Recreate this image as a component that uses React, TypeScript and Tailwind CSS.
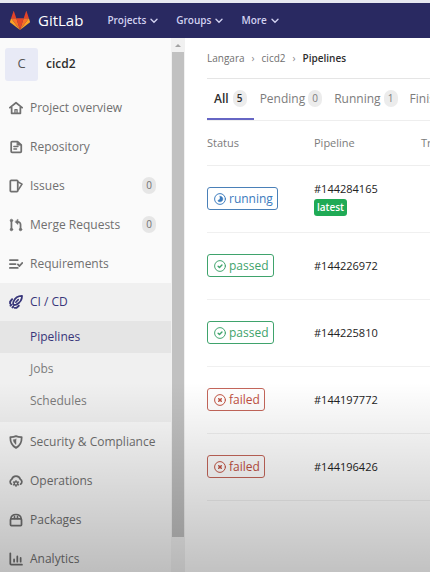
import type { ReactNode } from "react";

function Icon({ children, className = "size-[14px]" }: { children: ReactNode; className?: string }) {
  return (
    <svg
      viewBox="0 0 16 16"
      className={`shrink-0 ${className}`}
      fill="none"
      stroke="currentColor"
      strokeWidth="2"
      strokeLinecap="round"
      strokeLinejoin="round"
      aria-hidden="true"
    >
      {children}
    </svg>
  );
}

const icons = {
  home: (
    <>
      <path d="M1 7.600 8 2l7 5.600M3 7v7h10V7" />
      <path d="M6.800 13.500v-3.700h2.400v3.700" strokeWidth="1.500" />
    </>
  ),
  doc: (
    <>
      <path d="M3.500 1.800h6.300L14 5.600v7.600a1 1 0 0 1-1 1H3.500a1 1 0 0 1-1-1V2.800a1 1 0 0 1 1-1z" />
      <path d="M5.600 7.300h4.600M5.600 10.400h3" strokeWidth="1.700" />
      <path d="M9.300 2.200 13.600 6H9.300z" fill="currentColor" strokeWidth="0.600" />
    </>
  ),
  issues: (
    <>
      <rect x="1.500" y="1.500" width="8.500" height="13" rx="1" />
      <path d="M10.500 3.500 14.900 5.800 10.800 12.200" strokeWidth="1.800" />
    </>
  ),
  merge: (
    <>
      <path d="M2.800 3.500v9.500M13.200 13V7.500a3 3 0 0 0-3-3" />
      <circle cx="2.800" cy="2.800" r="1.500" fill="currentColor" strokeWidth="0.600" />
      <circle cx="2.800" cy="13.200" r="1.500" fill="currentColor" strokeWidth="0.600" />
      <circle cx="13.200" cy="13.200" r="1.500" fill="currentColor" strokeWidth="0.600" />
      <path d="M10.300 1.600v5.800L7 4.500z" fill="currentColor" strokeWidth="0.600" />
    </>
  ),
  requirements: <path d="M1 3.500h9M1 8h6.500M1 12.500h9M10.200 8.500l1.800 1.800L15.200 6.800" />,
  rocket: (
    <>
      <path d="M14.900 1.100C10.500 1 7 3.300 5 7.800l-.4 2.700 1 1 2.700-.5c4.300-2.200 6.600-5.500 6.600-9.900z" strokeWidth="2" />
      <path d="M10.600 5.300 7.800 8.300" strokeWidth="1.800" />
      <path d="M3.600 4.800 1.300 7.600v2.200M11.200 12.300l-2.600 2.400H6.400M2.600 11.300l-.9.900M4.800 13.300l-.9.900" strokeWidth="2.200" />
    </>
  ),
  shield: (
    <>
      <path d="M8 1.300c2 .9 4 1.300 6.500 1.200C14.600 8.500 12.500 12.300 8 14.700 3.500 12.300 1.400 8.500 1.500 2.500 4 2.600 6 2.200 8 1.300z" />
      <path d="M8 4.800v6C6 9.200 5 7.500 4.900 5.300 6 5.300 7 5.200 8 4.800z" fill="currentColor" strokeWidth="0.500" />
    </>
  ),
  cloud: (
    <>
      <path d="M2.800 11.600A3.200 3.200 0 0 1 3.200 6C3.800 3.500 5.700 2.300 8 2.300s4.300 1.200 4.900 3.700a3.200 3.200 0 0 1 .3 5.600" />
      <circle cx="8" cy="10.800" r="2" strokeWidth="1.700" />
      <path d="M8 7.500v.8M8 13.300v.8M5.100 9.200l.7.400M10.200 12l.7.400M5.100 12.400l.7-.4M10.200 9.600l.7-.4" strokeWidth="1.500" />
    </>
  ),
  package: (
    <>
      <rect x="1.700" y="6.600" width="12.600" height="7.800" rx="1" />
      <path d="M2 6.600C2.500 3 4.500 1.700 8 1.700s5.500 1.300 6 4.900M6.300 6.300V4.200M9.700 6.300V4.200" strokeWidth="1.900" />
    </>
  ),
  chart: (
    <>
      <path d="M1.500 1.500v12a1 1 0 0 0 1 1h12.300" />
      <path d="M5.800 8.500V11M9.500 5v6M13.300 6.800V11" />
    </>
  ),
};

function Chevron() {
  return (
    <svg viewBox="0 0 8 6" className="h-[6px] w-[8px]" fill="none" stroke="currentColor" strokeWidth="1.400" strokeLinecap="round" aria-hidden="true">
      <path d="M1 1.200l3 3 3-3" />
    </svg>
  );
}

function Logo() {
  return (
    <svg viewBox="0 0 20 19" className="h-[19px] w-[20px]" aria-hidden="true">
      <path d="M10 19 13.700 7.300H6.300z" fill="#e24329" />
      <path d="M10 19 6.300 7.300H1.100zM10 19l3.700-11.700h5.200z" fill="#fc6d26" />
      <path d="M1.100 7.300 0 10.700c-.1.400 0 .7.300.9L10 19zM18.900 7.300 20 10.700c.1.400 0 .7-.3.900L10 19z" fill="#fca326" />
      <path d="M1.100 7.300h5.200L4 .4c-.1-.4-.5-.4-.6 0zM18.900 7.300h-5.200L16 .4c.1-.4.500-.4.600 0z" fill="#e24329" />
    </svg>
  );
}

function NavItem({ icon, label, count, active }: { icon: ReactNode; label: string; count?: number; active?: boolean }) {
  return (
    <a
      href="#"
      className={`flex items-center gap-[7px] pr-[15px] pl-[9px] text-[12px] whitespace-nowrap ${active ? "h-[38px] font-medium text-[#38367a]" : "h-[39px] text-[#707070]"}`}
    >
      <Icon>{icon}</Icon>
      <span className="flex-1">{label}</span>
      {count !== undefined && (
        <span className="flex h-[17px] w-[14px] items-center justify-center rounded-full bg-[#e6e6e6] text-[10px]">{count}</span>
      )}
    </a>
  );
}

function SubItem({ label, active }: { label: string; active?: boolean }) {
  return (
    <a
      href="#"
      className={`flex h-[32px] items-center pl-[30px] text-[12px] ${active ? "bg-[#e5e5e5] font-medium text-[#38367a]" : "text-[#7c7c7c]"}`}
    >
      {label}
    </a>
  );
}

function Tab({ label, count, active }: { label: string; count?: number; active?: boolean }) {
  return (
    <button
      type="button"
      role="tab"
      aria-selected={!!active}
      className={`flex h-[41px] shrink-0 items-center border-b-2 text-[12px] ${active ? "gap-1 border-[#6666c4] px-[7px] font-semibold text-[#2e2e2e]" : "gap-[3px] border-transparent px-[6px] text-[#7c7c7c]"}`}
    >
      {label}
      {count !== undefined && (
        <span className="flex h-[17px] w-[14px] items-center justify-center rounded-full bg-[#ececec] text-[10px]">{count}</span>
      )}
    </button>
  );
}

type Status = "running" | "passed" | "failed";

const statusColors: Record<Status, string> = {
  running: "border-[#4a80b8] text-[#3a7abd]",
  passed: "border-[#3fa36c] text-[#3fa36c]",
  failed: "border-[#c4665a] text-[#c0503f]",
};

const statusIcons: Record<Status, ReactNode> = {
  running: <path d="M8 4.500v3.500L5 10.200A3.800 3.800 0 1 0 8 4.200z" fill="currentColor" strokeWidth="0.600" />,
  passed: <path d="M5.500 8.200l1.800 1.800 3.300-3.400" strokeWidth="1.900" />,
  failed: <path d="M6.300 6.300l3.400 3.400M9.700 6.300 6.300 9.700" strokeWidth="2" />,
};

function StatusBadge({ status }: { status: Status }) {
  return (
    <a href="#" className={`inline-flex h-[23px] items-center gap-[3px] rounded-[3px] border pr-[4px] pl-[6px] text-[12px] ${statusColors[status]}`}>
      <Icon className="size-[12px]">
        <circle cx="8" cy="8" r="7.200" strokeWidth="1.300" />
        {statusIcons[status]}
      </Icon>
      {status}
    </a>
  );
}

const pipelines: { id: string; status: Status; latest?: boolean }[] = [
  { id: "#144284165", status: "running", latest: true },
  { id: "#144226972", status: "passed" },
  { id: "#144225810", status: "passed" },
  { id: "#144197772", status: "failed" },
  { id: "#144196426", status: "failed" },
];

export default function App() {
  return (
    <div className="relative flex h-screen flex-col overflow-hidden bg-white font-['Open_Sans','Noto_Sans',sans-serif]">
      <header className="flex h-[38px] shrink-0 items-center border-t-[3px] border-[#e6e8f0] bg-[#292961] pl-[10px] text-white">
        <a href="#" className="flex items-center gap-2 text-[15px]">
          <Logo />
          GitLab
        </a>
        <nav className="ml-[24px] flex gap-[18px] text-[10px] font-semibold text-[#d1d1f0]">
          {["Projects", "Groups", "More"].map((name) => (
            <button key={name} type="button" className="flex items-center gap-[4px]">
              {name}
              <Chevron />
            </button>
          ))}
        </nav>
      </header>

      <div className="flex min-h-0 flex-1">
        <aside className="w-[171px] shrink-0 overflow-hidden bg-[#fafafa]">
          <a href="#" className="flex h-[50px] items-center gap-2 pt-[2px] pl-[5px] text-[12px] font-semibold text-[#2e2e2e]">
            <span className="flex size-[33px] items-center justify-center rounded-[3px] bg-[#e8eaf6] text-[13px] font-normal text-[#555]">C</span>
            cicd2
          </a>
          <nav>
            <NavItem icon={icons.home} label="Project overview" />
            <NavItem icon={icons.doc} label="Repository" />
            <NavItem icon={icons.issues} label="Issues" count={0} />
            <NavItem icon={icons.merge} label="Merge Requests" count={0} />
            <NavItem icon={icons.requirements} label="Requirements" />
            <div className="bg-[#f0f0f0] pb-[5px]">
              <NavItem icon={icons.rocket} label="CI / CD" active />
              <SubItem label="Pipelines" active />
              <SubItem label="Jobs" />
              <SubItem label="Schedules" />
            </div>
            <NavItem icon={icons.shield} label="Security & Compliance" />
            <NavItem icon={icons.cloud} label="Operations" />
            <NavItem icon={icons.package} label="Packages" />
            <NavItem icon={icons.chart} label="Analytics" />
          </nav>
        </aside>

        <div className="flex w-[14px] shrink-0 flex-col items-center bg-[#f1f1f1] pb-[35px]" aria-hidden="true">
          <svg viewBox="0 0 14 14" className="size-[14px] shrink-0">
            <path d="M4 9l3-3 3 3z" fill="#a3a3a3" />
          </svg>
          <div className="w-[12px] flex-1 bg-[#c1c1c1]" />
        </div>

        <main className="min-w-0 flex-1 overflow-hidden pl-[22px]">
          <nav aria-label="Breadcrumb" className="flex h-[41px] items-center gap-[7px] border-b border-[#e5e5e5] text-[10px] text-[#707070]">
            <a href="#">Langara</a>
            <span className="text-[#888]">›</span>
            <a href="#">cicd2</a>
            <span className="text-[#888]">›</span>
            <a href="#" className="font-semibold text-[#2e2e2e]">Pipelines</a>
          </nav>
          <div role="tablist" className="flex overflow-hidden border-b border-[#eeeeee]">
            <Tab label="All" count={5} active />
            <Tab label="Pending" count={0} />
            <Tab label="Running" count={1} />
            <Tab label="Finished" />
          </div>
          <table className="w-[321px] table-fixed text-left">
            <thead>
              <tr className="h-[44px] border-b border-[#eeeeee] text-[11px] text-[#7c7c7c]">
                <th className="font-normal">Status</th>
                <th className="font-normal">Pipeline</th>
                <th className="font-normal">Triggerer</th>
              </tr>
            </thead>
            <tbody>
              {pipelines.map((p) => (
                <tr key={p.id} className="h-[67px] border-b border-[#f0f0f0]">
                  <td>
                    <StatusBadge status={p.status} />
                  </td>
                  <td className="text-[11px] leading-[20px] text-[#222]">
                    <a href="#" className="block">{p.id}</a>
                    {p.latest && (
                      <span className="mb-[3px] flex h-[17px] w-[33px] items-center justify-center rounded-[3px] bg-[#1faa55] text-[10px] font-semibold text-white">
                        latest
                      </span>
                    )}
                  </td>
                  <td />
                </tr>
              ))}
            </tbody>
          </table>
        </main>
      </div>

      <div className="pointer-events-none absolute inset-x-0 bottom-0 h-[190px] bg-linear-to-b from-transparent to-black/24" />
    </div>
  );
}
